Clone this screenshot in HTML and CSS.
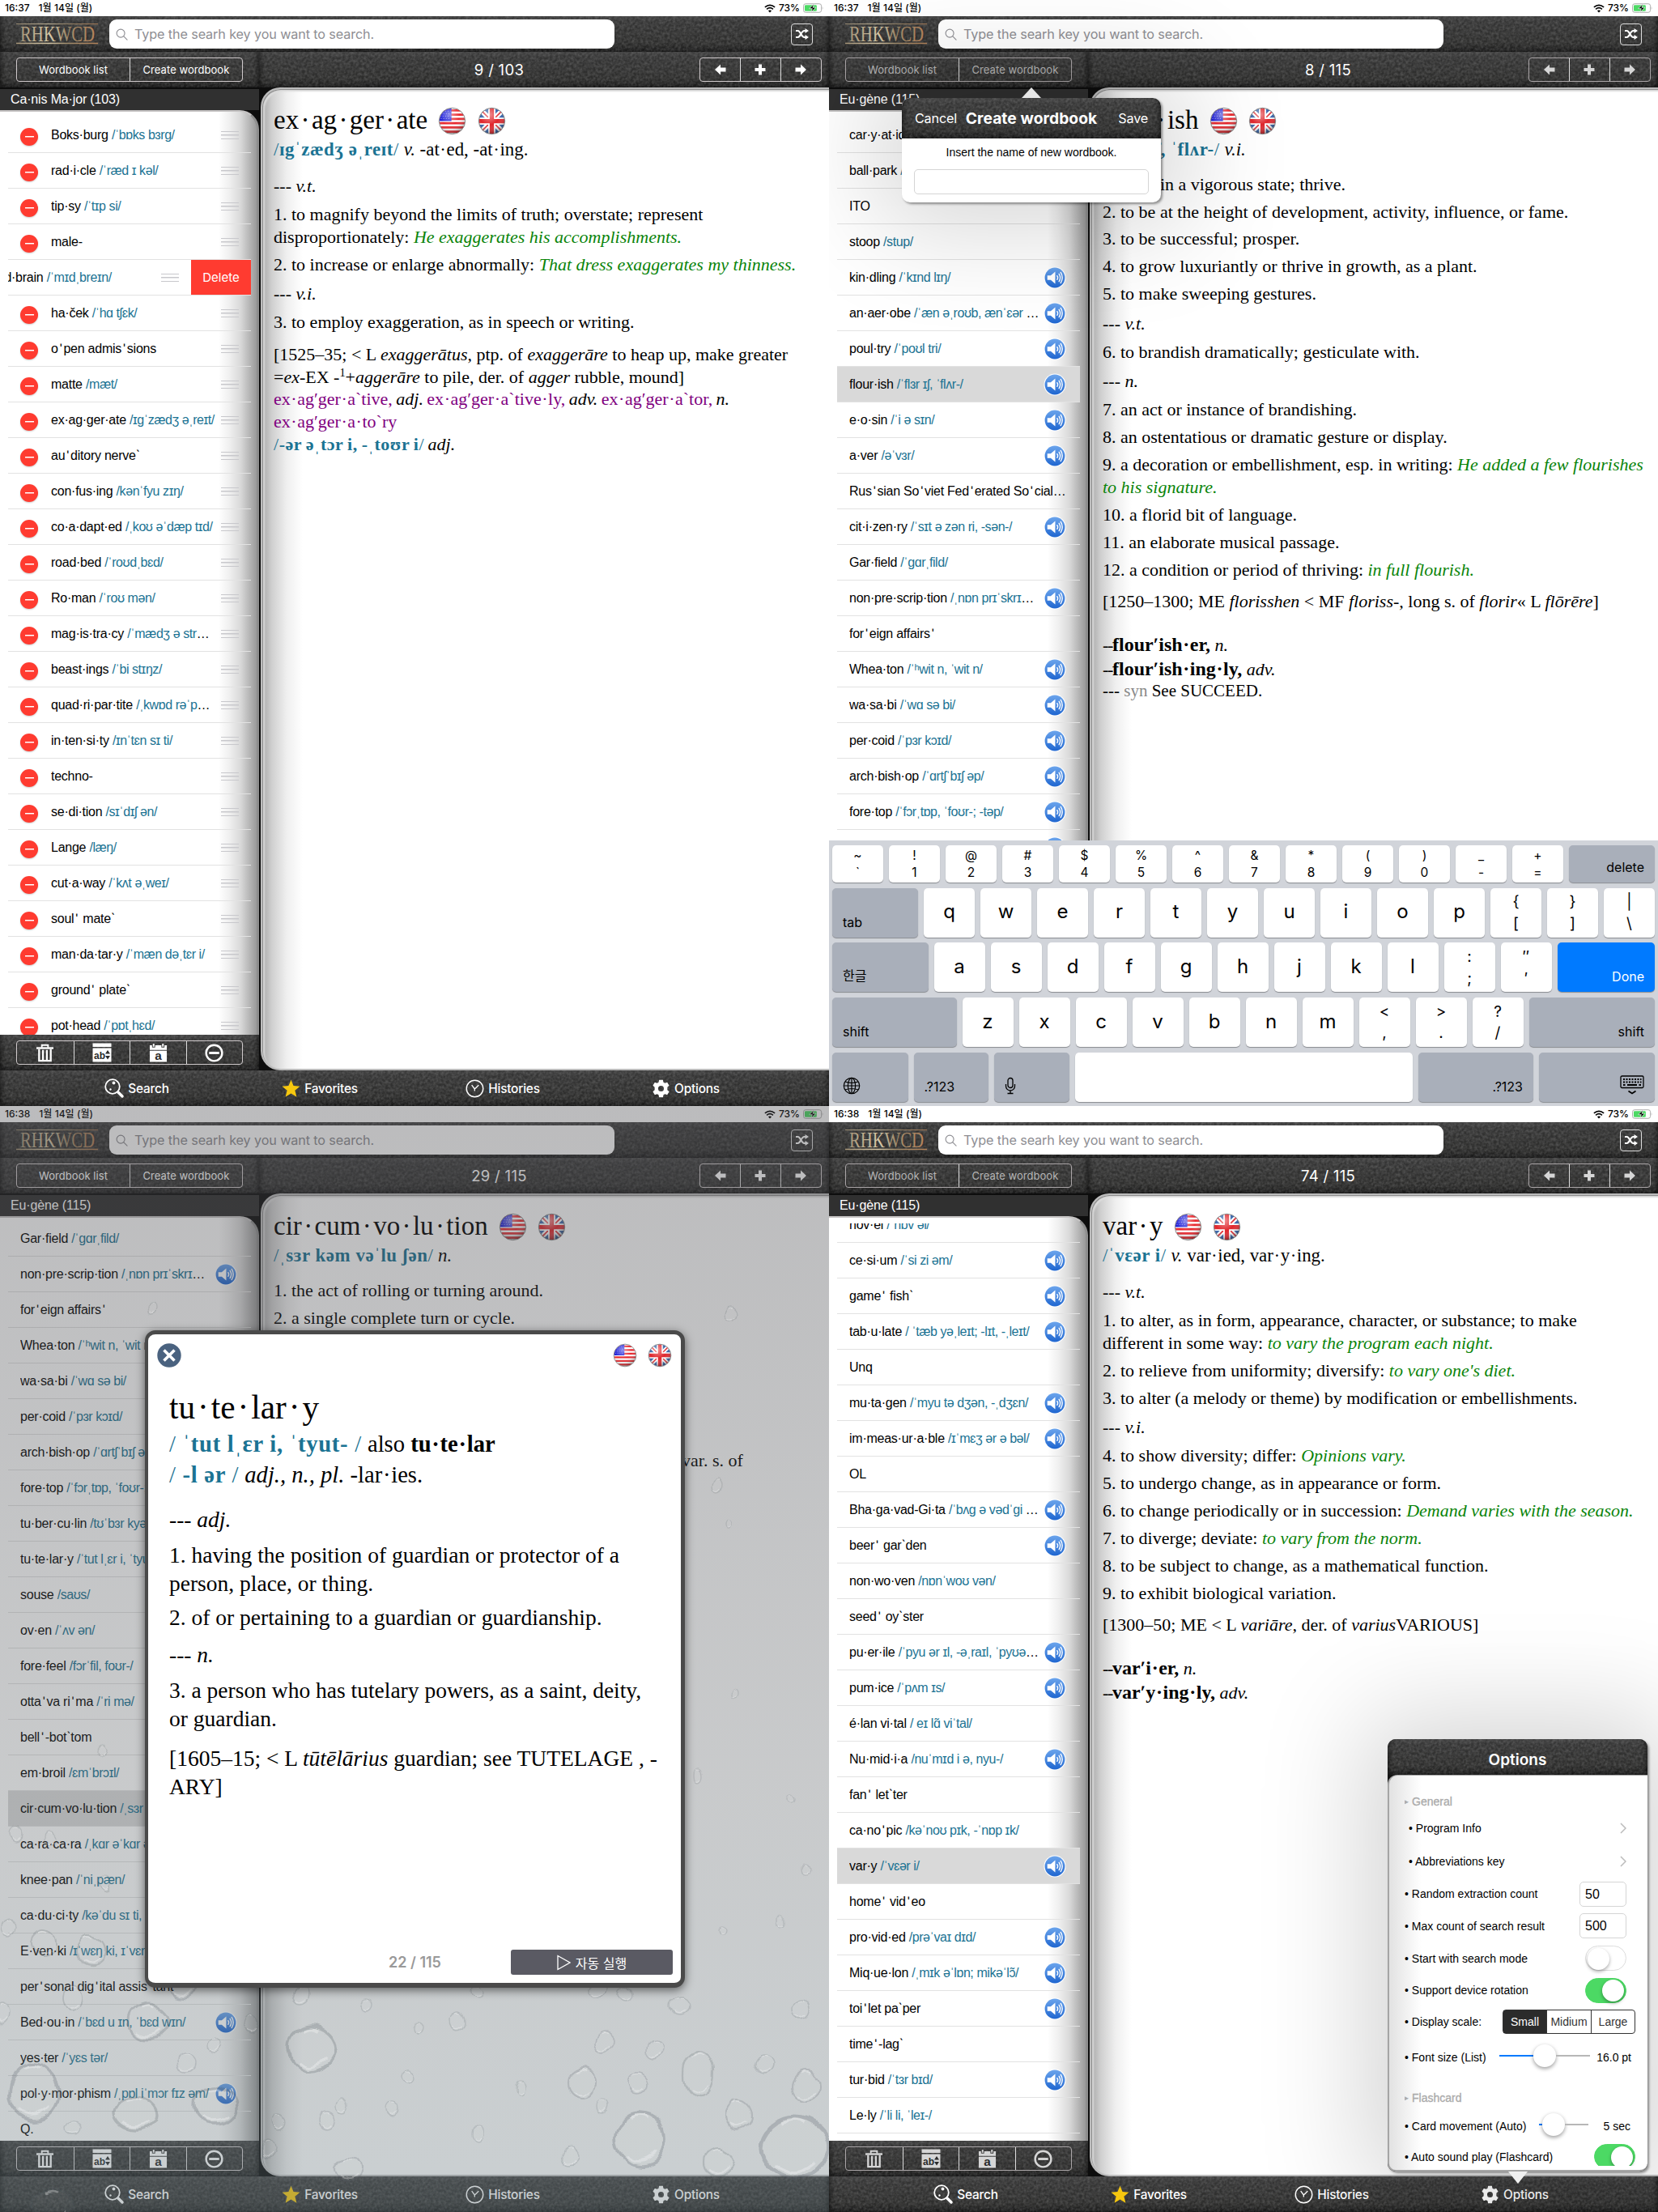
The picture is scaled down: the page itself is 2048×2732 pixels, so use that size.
FILE: index.html
```html
<!DOCTYPE html>
<html lang="en">
<head>
<meta charset="utf-8">
<title>RHKWCD dictionary</title>
<link rel="stylesheet" href="styles.css">
</head>
<body>
<svg class="sprite" aria-hidden="true">
  <defs>
    <clipPath id="round"><circle cx="20" cy="20" r="18"/></clipPath>
    <radialGradient id="gloss" cx=".4" cy=".25" r=".8"><stop offset="0" stop-color="#fff" stop-opacity=".5"/><stop offset=".5" stop-color="#fff" stop-opacity="0"/><stop offset="1" stop-color="#000" stop-opacity=".45"/></radialGradient>
    <linearGradient id="blue" x2="0" y2="1"><stop offset="0" stop-color="#6ba4ec"/><stop offset="1" stop-color="#1f66d0"/></linearGradient>
    <linearGradient id="gold"><stop offset="0" stop-color="#a8977a"/><stop offset=".4" stop-color="#d8c9a8"/><stop offset=".62" stop-color="#a08c6c"/><stop offset="1" stop-color="#b5835a"/></linearGradient>
    <filter id="wobble"><feTurbulence type="fractalNoise" baseFrequency=".03" numOctaves="2" seed="4"/><feDisplacementMap in="SourceGraphic" scale="16" xChannelSelector="R" yChannelSelector="G"/></filter>
  </defs>
  <symbol id="us" viewBox="0 0 40 40"><g clip-path="url(#round)"><path fill="#fff" d="M0 0h40v40H0z"/><path stroke="#e8252b" stroke-width="3" d="M0 5h40M0 11h40M0 17h40M0 23h40M0 29h40M0 35h40"/><path fill="#2020d8" d="M0 0h19v20H0z"/><path stroke="#9c9cf0" stroke-width="1" stroke-dasharray="1.2 2.4" d="M3 6h15M4 9.500h14M3 13h15M4 16.500h14"/></g><circle cx="20" cy="20" r="18" fill="url(#gloss)"/><circle cx="20" cy="20" r="18.500" fill="none" stroke="#777"/></symbol>
  <symbol id="uk" viewBox="0 0 40 40"><g clip-path="url(#round)"><path fill="#2f5fa8" d="M0 0h40v40H0z"/><path stroke="#fff" stroke-width="7" d="M4 4l32 32M36 4L4 36"/><path stroke="#e0262c" stroke-width="2" d="M4 4l32 32M36 4L4 36"/><path stroke="#fff" stroke-width="10" d="M20 0v40M0 20h40"/><path stroke="#e0262c" stroke-width="6" d="M20 0v40M0 20h40"/></g><circle cx="20" cy="20" r="18" fill="url(#gloss)"/><circle cx="20" cy="20" r="18.500" fill="none" stroke="#777"/></symbol>
  <symbol id="speaker" viewBox="0 0 30 30"><circle cx="15" cy="15" r="14.500" fill="#fff"/><circle cx="15" cy="15" r="13.300" fill="url(#blue)"/><path fill="#fff" d="M5 12h4.500l6-5v16l-6-5H5z"/><path fill="none" stroke="#fff" stroke-width="1.500" stroke-linecap="round" d="M18 12.500q1.800 2.500 0 5M20.500 10q3.200 5 0 10M22.700 8q4.300 7 0 14"/></symbol>
  <symbol id="search" viewBox="0 0 16 16"><g fill="none" stroke="#8e8e93" stroke-width="1.200" stroke-linecap="round"><circle cx="6.500" cy="6.500" r="5.300"/><path d="M10.500 10.500l4.500 4.500"/></g></symbol>
  <symbol id="shuffle" viewBox="0 0 16 14"><g fill="none" stroke="currentColor" stroke-width="2.200"><path d="M0 3h2.500c3.500 0 4 8 8 8H12M0 11h2.500c3.500 0 4-8 8-8H12"/></g><path fill="currentColor" d="M11.500 0L16 3l-4.500 3zM11.500 8l4.500 3-4.500 3z"/></symbol>
  <symbol id="left" viewBox="0 0 16 14"><path fill="currentColor" d="M1 7l7-6.500v4h6.500v5H8v4z"/></symbol>
  <symbol id="right" viewBox="0 0 16 14"><path fill="currentColor" d="M15 7L8 .5v4H1.500v5H8v4z"/></symbol>
  <symbol id="plus" viewBox="0 0 16 14"><path fill="currentColor" d="M6 .5h4V5h4.500v4H10v4.500H6V9H1.500V5H6z"/></symbol>
  <symbol id="trash" viewBox="0 0 24 24"><path fill="none" stroke="currentColor" stroke-width="2" d="M8 5V1.800h8V5"/><path fill="currentColor" d="M1 4.500h22V7H1z"/><path fill="none" stroke="currentColor" stroke-width="2.400" d="M4.500 7v15h15V7M9.500 8v14M14.500 8v14"/></symbol>
  <symbol id="sort" viewBox="0 0 24 24"><path fill="currentColor" d="M.5.500h23v4.500H.5zM.5 6.500h23v17H.5z"/><text x="2" y="19.500" class="glyph">ab</text><path fill="#2b2b2b" d="M19 9l3 4.500h-6zM19 20.500l3-4.500h-6z"/></symbol>
  <symbol id="date" viewBox="0 0 24 24"><path fill="currentColor" d="M1 2h3v3h4V2h8v3h4V2h3v6H1zM5 0h2v4H5zM17 0h2v4h-2zM1 9h22v14.500H1z"/><text x="7.500" y="20.500" class="glyph big">a</text></symbol>
  <symbol id="minus" viewBox="0 0 24 24"><circle cx="12" cy="12" r="10.300" fill="none" stroke="currentColor" stroke-width="2.600"/><path stroke="currentColor" stroke-width="3" d="M5.500 12h13"/></symbol>
  <symbol id="find" viewBox="0 0 24 24"><g fill="none" stroke="currentColor"><circle cx="10" cy="10" r="8.800" stroke-width="1.800"/><path stroke-width="3.400" stroke-linecap="round" d="M17 17l5 5"/></g><circle cx="11.500" cy="5.500" r="1.900" fill="currentColor"/><circle cx="7.500" cy="13.500" r="1.200" fill="currentColor"/></symbol>
  <symbol id="star" viewBox="0 0 24 24"><path fill="#f7c80f" d="M12 .8l3.200 7.600 8.300.6-6.400 5.300 2.100 8.500L12 18.200l-7.200 4.600 2.100-8.500L.5 9l8.300-.6z"/></symbol>
  <symbol id="clock" viewBox="0 0 24 24"><circle cx="12" cy="12" r="10.700" fill="none" stroke="currentColor" stroke-width="1.500"/><path fill="none" stroke="currentColor" stroke-width="1.400" d="M8 7.500l3.800 5L17 7.500M11.800 12v3"/></symbol>
  <symbol id="gear" viewBox="0 0 24 24"><path fill="currentColor" fill-rule="evenodd" d="M9.500.8h5l.6 3 2 1.100 2.900-1 2.500 4.300L20.200 10.200v3.600l2.300 2-2.500 4.300-2.900-1-2 1.100-.6 3h-5l-.6-3-2-1.100-2.900 1-2.500-4.300 2.300-2v-3.600l-2.300-2L4 3.900l2.900 1 2-1.100zM12 8.300a3.700 3.700 0 100 7.400 3.700 3.700 0 000-7.400z"/></symbol>
  <symbol id="wifi" viewBox="0 0 16 12"><path fill="none" stroke="#000" stroke-width="1.900" d="M1 4.200q7-6 14 0M3.500 7q4.500-3.800 9 0"/><path fill="#000" d="M5.600 9.200q2.400-2 4.800 0L8 11.800z"/></symbol>
  <symbol id="battery" viewBox="0 0 27 12"><rect x=".5" y=".5" width="23" height="11" rx="2.800" fill="none" stroke="#aaa"/><rect x="2" y="2" width="15.500" height="8" rx="1.500" fill="#4cd964"/><path fill="#aaa" d="M24.700 4q1.500 2 0 4z"/><path fill="#000" stroke="#fff" stroke-width=".7" d="M14 .6L8 6.700h3.800L10.300 11.400l6-6.200h-3.800z"/></symbol>
  <symbol id="close" viewBox="0 0 30 30"><circle cx="15" cy="15" r="14.700" fill="#4a627f"/><path stroke="#fff" stroke-width="3.600" d="M8.500 8.500l13 13M21.500 8.500l-13 13"/></symbol>
  <symbol id="globe" viewBox="0 0 22 22"><g fill="none" stroke="#000" stroke-width="1.200"><circle cx="11" cy="11" r="9.700"/><ellipse cx="11" cy="11" rx="4.600" ry="9.700"/><path d="M11 1v20M1.500 11h19M3 6q8 3 16 0M3 16q8-3 16 0"/></g></symbol>
  <symbol id="mic" viewBox="0 0 14 22"><g fill="none" stroke="#000" stroke-width="1.300"><rect x="4" y="1.500" width="6" height="12" rx="3"/><path d="M1.500 9v2.500a5.500 5.500 0 0011 0V9M7 17v3.500M3.500 20.500h7"/></g></symbol>
  <symbol id="keys" viewBox="0 0 30 24"><g fill="none" stroke="#000" stroke-width="1.300"><rect x="1" y="1" width="28" height="14.500" rx="1.500"/><path stroke-width="2" stroke-dasharray="2 1.500" d="M4 5h22.500M4 8.500h22.500"/><path stroke-width="1.800" d="M4 12h2.500M9 12h12M23.500 12H26M10.500 19.500l4.500 3 4.500-3"/></g></symbol>
  <symbol id="logo" viewBox="0 0 101 26"><path stroke="url(#gold)" stroke-width=".9" d="M0 .6h101v.01"/><path stroke="url(#gold)" stroke-width="1.500" d="M0 24.600h101v.01"/><text x="5" y="21.500" class="brand" textLength="92" lengthAdjust="spacingAndGlyphs" fill="url(#gold)">RHKWCD</text></symbol>
</svg>
<main id="board" class="board"></main>
<script src="app.js"></script>
</body>
</html>
```
FILE: styles.css
```css
* { box-sizing: border-box; }
body { margin: 0; background: #000; font-family: Inter, "Noto Sans CJK KR", sans-serif; color: #000; }
h1, h2, p, ul { margin: 0; padding: 0; }
svg { display: block; flex: none; }
.sprite { position: absolute; width: 0; height: 0; }
.glyph { font: bold 12px "Liberation Sans", sans-serif; fill: #2b2b2b; }
.glyph.big { font-size: 16px; }
.brand { font: 27px "Liberation Serif", serif; }

.board { display: grid; grid-template-columns: 1024px 1024px; grid-template-rows: 1366px 1366px; width: 2048px; }
.screen { position: relative; display: grid; grid-template-rows: 20px 44px 1258px 44px; overflow: hidden; background: #0d0d0d; }

.status { display: flex; align-items: center; gap: 4px; padding: 0 6px 0 6px; background: #fff; font-size: 12px; line-height: 16px; font-weight: 500; }
.status .day { margin: 0 auto 0 7px; letter-spacing: .05px; white-space: nowrap; }

.leather {
  background:
    url("data:image/svg+xml,%3Csvg xmlns='http://www.w3.org/2000/svg' width='256' height='256'%3E%3Cfilter id='n'%3E%3CfeTurbulence type='fractalNoise' baseFrequency='.3' numOctaves='2' stitchTiles='stitch'/%3E%3CfeColorMatrix values='0 0 0 0 1 0 0 0 0 1 0 0 0 0 1 .28 0 0 0 -.08'/%3E%3C/filter%3E%3Crect width='256' height='256' filter='url(%23n)'/%3E%3C/svg%3E"),
    linear-gradient(#4a4a4a, #343434 12%, #2d2d2c 75%, #191919);
  box-shadow: inset 4px 0 5px -2px rgba(0,0,0,.5), inset -4px 0 5px -2px rgba(0,0,0,.5);
  color: #fff;
}
.top { display: flex; align-items: center; padding: 0 20px; }
.field { display: flex; align-items: center; gap: 8px; width: 624px; height: 36px; margin-left: 14px; padding-left: 8px; border-radius: 9px; background: #fff; color: #8e8e93; font-size: 16.2px; letter-spacing: -.12px; }
.shuffle { display: grid; place-items: center; width: 27px; height: 27px; margin-left: auto; border: 1.500px solid #ddd; border-radius: 4px; }

.main { display: grid; grid-template-columns: 320px 704px; min-height: 0; }
.side { display: grid; grid-template-rows: 44px 28px 1142px 44px; min-width: 0; }
.bar { display: flex; align-items: center; padding: 0 20px; }
.seg { display: grid; grid-auto-flow: column; grid-auto-columns: 1fr; width: 280px; height: 30px; border: 1.500px solid #cfc9cb; border-radius: 4px; font-size: 13px; letter-spacing: .05px; }
.seg > * { display: grid; place-items: center; }
.seg > * + * { border-left: 1px solid #ddd; }
.seg.nav { width: 151px; margin-left: auto; padding-right: 1px; }
.muted .seg { color: #d6d6d6; border-color: #aaa5a7; }
.muted .wb { color: #b5b5b5; }
.head { position: relative; padding-right: 9px; }
.head .count { position: absolute; left: 0; right: 0; padding-right: 111px; text-align: center; font-size: 18.500px; letter-spacing: .3px; }
.book { margin-top: 2px; padding-left: 13px; background: #303030; color: #fff; font: 16px/26px "Liberation Sans", sans-serif; letter-spacing: -.15px; }

.list { overflow: hidden; border-top: 2px solid #c4c2c2; border-right: 3px solid #8e8e8e; border-radius: 0 24px 0 0; background: linear-gradient(90deg, #fff 270px, #f0f0f0 283px, #d9d9d9 297px, #9a9a9a 317px); padding-top: 7px; display: grid; }
.clip { overflow: hidden; }
.list ul { list-style: none; margin-top: var(--shift); }
.list li { display: flex; height: 44px; width: 300px; margin-left: 10px; overflow: hidden; border-bottom: 1.500px solid #e2e2e2; font: 16px/1.250 "Liberation Sans", sans-serif; }
.row { display: flex; align-items: center; gap: 4px; flex: none; width: 300px; padding: 1px 17px 0 15px; }
.word { flex: 1; min-width: 0; overflow: hidden; white-space: nowrap; text-overflow: ellipsis; letter-spacing: -.25px; }
.word b { font-weight: 400; padding: 0 2px; }
.ipa { color: #1b7393; letter-spacing: -.43px; }
.on { background: #d9d9d9; }
.edit .row { gap: 6px; padding-right: 15px; }
.stop { width: 22px; height: 22px; margin: 3px 10px 0 0; border-radius: 50%; background: linear-gradient(#fff, #fff) center / 11px 1.500px no-repeat #ff3b30; box-shadow: 0 1px 2px rgba(0,0,0,.2); flex: none; }
.grip { width: 22px; height: 10px; flex: none; border: solid #c8c8cc; border-width: 1.500px 0; background: linear-gradient(#c8c8cc, #c8c8cc) center / 22px 1.500px no-repeat; }
.swiped .row { margin-left: -74px; }
.delete { display: grid; place-items: center; width: 74px; background: #ff3b30; color: #fff; font: 15px Inter, sans-serif; }

.view { display: grid; grid-template-rows: 44px 1214px; min-width: 0; }
.page { margin-left: 2px; padding: 19px 0 0 14px; border: 2px solid #bcbcbc; border-right: 0; border-radius: 24px 0 0 24px; box-shadow: inset 1px 1px 1px #858585, inset 3px 3px 2px #ddd; background: linear-gradient(90deg, #a8a8a8, #d0d0d0 12px, #efefef 30px, #fff 50px); font-size: 22px; overflow: hidden; }

.entry { font-family: "Liberation Serif", serif; line-height: 1.2727; white-space: nowrap; }
.entry h1 { display: flex; align-items: center; gap: .4em; font-size: 1.5em; line-height: 1.212; font-weight: 400; }
.entry h1 svg { margin-top: .05em; }
.entry h1 u { padding: 0 .072em; }
.entry u { text-decoration: none; padding: 0 .025em; }
.entry .sub { font-size: 1.04em; line-height: 1.311; margin-top: .045em; }
.entry .pro { color: #1b7393; font-weight: 700; letter-spacing: .025em; }
.entry s { font-weight: 400; text-decoration: none; }
.entry .pos { margin-top: .39em; }
.entry .def { margin-top: .27em; }
.entry .pos + .def { margin-top: .32em; }
.entry .sub + .pos { margin-top: .72em; }
.entry .sub + .def { margin-top: .62em; }
.entry .ety { margin-top: .51em; }
.entry .fam { margin-top: 1.12em; line-height: 1.364; }
.entry .fam b { font-size: 1.09em; line-height: 1; }
.entry .fam s { letter-spacing: -.06em; }
.entry .syn { margin-top: -.07em; font-size: .955em; }
.entry .forms { word-spacing: -.05em; }
.entry .ex { color: #0a840a; font-style: italic; }
.entry .run { color: #800080; }
.entry .gray { color: #888; }
.entry sup { font-size: .65em; line-height: 0; }
.entry .tail { margin: 148px 0 0 504px; }

.tabs { display: grid; grid-template-columns: repeat(4, 226px); padding-left: 56px; font-size: 15.400px; font-weight: 500; letter-spacing: -.2px; }
.tabs span { display: flex; align-items: center; justify-content: center; gap: 5px; }

.popover { position: absolute; border-radius: 10px; box-shadow: 0 0 130px 30px rgba(0,0,0,.17), 2px 2px 3px rgba(0,0,0,.4); }
.create { left: 90px; top: 121px; width: 320px; height: 129px; background: #fff; }
.create::before { content: ""; position: absolute; left: 148px; top: -13px; border: solid transparent; border-width: 0 12px 13px; border-bottom-color: #e6e6e6; }
.create header { display: grid; grid-template-columns: 1fr auto 1fr; align-items: center; height: 50px; padding: 0 16px; border-radius: 10px 10px 0 0; font-size: 16.200px; letter-spacing: -.2px; }
.create header :last-child { text-align: right; }
.create h2 { font-size: 19.200px; font-weight: 700; letter-spacing: .1px; }
.create p { margin: 9px 0 13px; text-align: center; font: 14px/16px "Liberation Sans", sans-serif; }
.input { height: 31px; border: 1px solid #d5d5d5; border-radius: 5px; background: #fff; }
.create .input { margin: 0 15px; }

.keyboard { position: absolute; left: 0; right: 0; bottom: 0; height: 328px; padding: 6px 4px 4px; display: grid; grid-template-rows: 46px repeat(4, 61px); row-gap: 6.700px; background: #d1d4da; }
.krow { display: flex; gap: 7px; }
.key { flex: none; display: flex; flex-direction: column; align-items: center; justify-content: center; width: 63px; padding-bottom: 3px; border-radius: 5px; background: #fff; box-shadow: 0 1px 1px #888b90; font-size: 24px; }
.key.two { justify-content: space-evenly; font-size: 19px; line-height: 1; padding-bottom: 0; }
.krow:first-child .key.two { font-size: 15.500px; }
.key.fn { background: #a9afba; font-size: 16px; align-items: flex-start; justify-content: flex-end; padding: 0 13px 9px; }
.key.fn.end { align-items: flex-end; }
.key.wide { flex: 1; }
.key.fn.done { background: #007aff; color: #fff; }
.krow:first-child .fn { justify-content: center; padding-bottom: 0; padding-top: 7px; }

.veil { position: absolute; inset: 0; background: linear-gradient(rgba(72,72,76,.37), rgba(85,90,94,.32) 60%, rgba(100,116,122,.34)); }
.card { position: absolute; left: 179px; top: 277px; width: 667px; height: 812px; border: solid #4a4a4a; border-width: 5px 5px 6px 4px; border-radius: 13px; background: #fff; box-shadow: 0 3px 12px rgba(0,0,0,.55); display: grid; grid-template-rows: 66px 1fr 55px; }
.cardtop { display: flex; align-items: center; gap: 13px; padding: 0 11px 14px; }
.cardtop :nth-child(2) { margin-left: auto; }
.card .entry { padding-left: 26px; font-size: 27.500px; }
.cardend { display: grid; grid-template-columns: 1fr 200px; padding: 14px 10px 10px 0; align-items: center; }
.cardend b { padding-left: 211px; text-align: center; color: #999; font-size: 18px; font-weight: 600; }
.auto { display: flex; align-items: center; justify-content: center; gap: 6px; height: 31px; border-radius: 3px; background: #5a5a63; color: #fff; font-size: 16px; }

.options { left: 690px; top: 782px; width: 321px; height: 534px; display: grid; grid-template-rows: 44px 1fr; background: #151515; }
.options::after { content: ""; position: absolute; left: 149px; bottom: -15px; border: solid transparent; border-width: 15px 12px 0; border-top-color: #f0f0f0; }
.options h2 { display: grid; place-items: center; padding-top: 6px; border-radius: 10px 10px 0 0; font-size: 19px; font-weight: 600; }
.sheet { overflow: hidden; padding: 18px 0 0 19px; border: solid #a5a5a5; border-width: 1px 0 2px 2px; border-radius: 12px 0 10px 10px; background: linear-gradient(90deg, #e2e2e2, #fff 40px); font: 14px "Liberation Sans", sans-serif; }
.opts { height: 464px; overflow: hidden; }
.opt { display: flex; align-items: center; height: 40px; padding-right: 26px; white-space: nowrap; }
.opt > :last-child { margin-left: auto; }
.opt .input { width: 58px; padding-left: 6px; font: 16px/29px "Liberation Sans", sans-serif; }
.opt.link { padding-left: 5px; }
.opt.group { color: #aaa; -webkit-text-stroke: .3px #aaa; }
.opt.group > span { margin-left: 0; }
.opt.group::before { content: "▸"; width: 9px; font: 9px "DejaVu Sans"; }
.switch { width: 51px; height: 31px; padding: 1.500px; border-radius: 16px; border: 1px solid #ddd; background: #fff; }
.switch::before { content: ""; display: block; width: 27px; height: 27px; border-radius: 50%; background: #fff; box-shadow: 0 2px 4px rgba(0,0,0,.35); }
.switch.yes { background: #4cd964; border-color: #4cd964; padding-left: 20px; }
.scale { display: grid; grid-template-columns: 53px 55px 54px; height: 30px; border: 1px solid #333; border-radius: 4px; color: #333; }
.scale span { display: grid; place-items: center; }
.scale span + span { border-left: 1px solid #333; }
.scale .sel { background: #2b2b2b; color: #fff; }
.slider { display: flex; align-items: center; height: 28px; margin-top: -4px; }
.slider::before { content: ""; width: var(--a); height: 2px; background: #007aff; }
.slider::after { content: ""; width: var(--b); height: 2px; background: #b7b7b7; }
.slider i { width: 28px; height: 28px; border-radius: 50%; background: #fff; box-shadow: 0 2px 5px rgba(0,0,0,.4); }
```
FILE: app.js
```js
const icon = (id, w, h = w) => `<svg width="${w}" height="${h}"><use href="#${id}"/></svg>`;
const flags = size => icon('us', size) + icon('uk', size);

// Word lists: "word|pronunciation|flags", where s = has sound, x = selected, d = swiped for delete
const canis = `Boks·burg|ˈbɒks bɜrg
rad·i·cle|ˈræd ɪ kəl
tip·sy|ˈtɪp si
male-
mid·brain|ˈmɪdˌbreɪn|d
ha·ček|ˈhɑ tʃɛk
oʹpen admisʹsions
matte|mæt
ex·ag·ger·ate|ɪgˈzædʒ əˌreɪt
auʹditory nerveˋ
con·fus·ing|kənˈfyu zɪŋ
co·a·dapt·ed|ˌkoʊ əˈdæp tɪd
road·bed|ˈroʊdˌbɛd
Ro·man|ˈroʊ mən
mag·is·tra·cy|ˈmædʒ ə strə si
beast·ings|ˈbi stɪŋz
quad·ri·par·tite|ˌkwɒd rəˈpɑr taɪt
in·ten·si·ty|ɪnˈtɛn sɪ ti
techno-
se·di·tion|sɪˈdɪʃ ən
Lange|læŋ
cut·a·way|ˈkʌt əˌweɪ
soulʹ mateˋ
man·da·tar·y|ˈmæn dəˌtɛr i
groundʹ plateˋ
pot·head|ˈpɒtˌhɛd`;
const eugeneA = `car·y·at·id|ˌkær iˈæt ɪd|s
ball·park|ˈbɔlˌpɑrk|s
ITO
stoop|stup
kin·dling|ˈkɪnd lɪŋ|s
an·aer·obe|ˈæn əˌroʊb, ænˈɛər oʊb|s
poul·try|ˈpoʊl tri|s
flour·ish|ˈflɜr ɪʃ, ˈflʌr-|sx
e·o·sin|ˈi ə sɪn|s
a·ver|əˈvɜr|s
Rusʹsian Soʹviet Fedʹerated Soʹcialist Republic
cit·i·zen·ry|ˈsɪt ə zən ri, -sən-|s
Gar·field|ˈgɑrˌfild
non·pre·scrip·tion|ˌnɒn prɪˈskrɪp ʃən|s
forʹeign affairsʹ
Whea·ton|ˈʰwit n, ˈwit n|s
wa·sa·bi|ˈwɑ sə bi|s
per·coid|ˈpɜr kɔɪd|s
arch·bish·op|ˈɑrtʃˈbɪʃ əp|s
fore·top|ˈfɔrˌtɒp, ˈfoʊr-; -təp|s
tu·ber·cu·lin|tʊˈbɜr kyə lɪn|s`;
const eugeneB = `Gar·field|ˈgɑrˌfild
non·pre·scrip·tion|ˌnɒn prɪˈskrɪp ʃən|s
forʹeign affairsʹ
Whea·ton|ˈʰwit n, ˈwit n|s
wa·sa·bi|ˈwɑ sə bi|s
per·coid|ˈpɜr kɔɪd|s
arch·bish·op|ˈɑrtʃˈbɪʃ əp|s
fore·top|ˈfɔrˌtɒp, ˈfoʊr-; -təp|s
tu·ber·cu·lin|tʊˈbɜr kyə lɪn|s
tu·te·lar·y|ˈtut lˌɛr i, ˈtyut-|s
souse|saʊs
ov·en|ˈʌv ən|s
fore·feel|fɔrˈfil, foʊr-
ottaʹva riʹma|ˈri mə
bellʹ-botˋtom
em·broil|ɛmˈbrɔɪl|s
cir·cum·vo·lu·tion|ˌsɜr kəm vəˈlu ʃən|sx
ca·ra·ca·ra|ˌkɑr əˈkɑr ə|s
knee·pan|ˈniˌpæn
ca·du·ci·ty|kəˈdu sɪ ti, -ˈdyu-|s
E·ven·ki|ɪˈwɛŋ ki, ɪˈvɛŋ-|s
perʹsonal digʹital assisʹtant
Bed·ou·in|ˈbɛd u ɪn, ˈbɛd wɪn|s
yes·ter|ˈyɛs tər
pol·y·mor·phism|ˌpɒl iˈmɔr fɪz əm|s
Q.`;
const eugeneC = `nov·el|ˈnɒv əl
ce·si·um|ˈsi zi əm|s
gameʹ fishˋ||s
tab·u·late| ˈtæb yəˌleɪt; -lɪt, -ˌleɪt|s
Unq
mu·ta·gen|ˈmyu tə dʒən, -ˌdʒɛn|s
im·meas·ur·a·ble|ɪˈmɛʒ ər ə bəl|s
OL
Bha·ga·vad-Gi·ta|ˈbʌg ə vədˈgi tɑ, -tə|s
beerʹ garˋden||s
non·wo·ven|nɒnˈwoʊ vən
seedʹ oyˋster
pu·er·ile|ˈpyu ər ɪl, -əˌraɪl, ˈpyʊər ɪl|s
pum·ice|ˈpʌm ɪs|s
é·lan vi·tal| eɪ lɑ̃ viˈtal
Nu·mid·i·a|nuˈmɪd i ə, nyu-|s
fanʹ letˋter
ca·noʹpic|kəˈnoʊ pɪk, -ˈnɒp ɪk
var·y|ˈvɛər i|sx
homeʹ vidʹeo
pro·vid·ed|prəˈvaɪ dɪd|s
Miq·ue·lon|ˌmɪk əˈlɒn; mikəˈlɔ̃|s
toiʹlet paˋper||s
timeʹ-lagˋ
tur·bid|ˈtɜr bɪd|s
Le·ly|ˈli li, ˈleɪ-`;

function row(line, edit) {
  const [word, ipa = '', mark = ''] = line.split('|');
  const name = word.replace(/ʹ/g, '<b>ʹ</b>');
  const text = `<span class="word">${name}${ipa ? ` <span class="ipa">/${ipa}/</span>` : ''}</span>`;
  const has = m => mark.includes(m);
  const body = edit
    ? `<i class="stop"></i>${text}<i class="grip"></i>`
    : text + (has('s') ? icon('speaker', 28) : '');
  return `<li class="${has('x') ? 'on' : ''} ${has('d') ? 'swiped' : ''}"><div class="row">${body}</div>${has('d') ? '<span class="delete">Delete</span>' : ''}</li>`;
}

const dots = html => html.replace(/·/g, '<u>·</u>');
const p = (cls, html) => `<p class="${cls}">${html}</p>`;
const def = (...items) => items.map(t => p('def', t.replace(/\{/g, '<span class="ex">').replace(/\}/g, '</span>'))).join('');
const pos = t => p('pos', `--- <i>${t}</i>`);

const exaggerate = dots(`<h1><span>ex·ag·ger·ate</span>${flags(35)}</h1>` +
  p('sub', `<span class="pro"><s>/</s>ɪgˈzædʒ əˌreɪt<s>/</s></span> <i>v.</i> -at·ed, -at·ing.`) + pos('v.t.') +
  def('1. to magnify beyond the limits of truth; overstate; represent<br>disproportionately: {He exaggerates his accomplishments.}', '2. to increase or enlarge abnormally: {That dress exaggerates my thinness.}') +
  pos('v.i.') + def('3. to employ exaggeration, as in speech or writing.') +
  p('ety', '[1525–35; &lt; L <i>exaggerātus,</i> ptp. of <i>exaggerāre</i> to heap up, make greater<br>=<i>ex</i>-EX -<sup>1</sup>+<i>aggerāre</i> to pile, der. of <i>agger</i> rubble, mound]') +
  p('forms', '<span class="run">ex·agʹger·aˋtive,</span> <i>adj.</i> <span class="run">ex·agʹger·aˋtive·ly,</span> <i>adv.</i> <span class="run">ex·agʹger·aˋtor,</span> <i>n.</i><br><span class="run">ex·agʹger·a·toˋry</span><br><span class="pro"><s>/</s>-ər əˌtɔr i, -ˌtoʊr i<s>/</s></span> <i>adj.</i>'));

const flourish = dots(`<h1><span>flour·ish</span>${flags(35)}</h1>` +
  p('sub', `<span class="pro"><s>/</s>ˈflɜr ɪʃ, ˈflʌr-<s>/</s></span> <i>v.i.</i>`) +
  def('1. to be in a vigorous state; thrive.', '2. to be at the height of development, activity, influence, or fame.', '3. to be successful; prosper.', '4. to grow luxuriantly or thrive in growth, as a plant.', '5. to make sweeping gestures.') +
  pos('v.t.') + def('6. to brandish dramatically; gesticulate with.') + pos('n.') +
  def('7. an act or instance of brandishing.', '8. an ostentatious or dramatic gesture or display.', '9. a decoration or embellishment, esp. in writing: {He added a few flourishes<br>to his signature.}', '10. a florid bit of language.', '11. an elaborate musical passage.', '12. a condition or period of thriving: {in full flourish.}') +
  p('ety', '[1250–1300; ME <i>florisshen</i> &lt; MF <i>floriss-,</i> long s. of <i>florir</i>« L <i>flōrēre</i>]') +
  p('fam', '<s>--</s><b>flourʹish·er,</b> <i>n.</i><br><s>--</s><b>flourʹish·ing·ly,</b> <i>adv.</i>') +
  p('syn', '--- <span class="gray">syn</span> See SUCCEED.'));

const circum = dots(`<h1><span>cir·cum·vo·lu·tion</span>${flags(35)}</h1>` +
  p('sub', `<span class="pro"><s>/</s>ˌsɜr kəm vəˈlu ʃən<s>/</s></span> <i>n.</i>`) +
  def('1. the act of rolling or turning around.', '2. a single complete turn or cycle.') + p('tail', 'var. s. of'));

const vary = dots(`<h1><span>var·y</span>${flags(35)}</h1>` +
  p('sub', `<span class="pro"><s>/</s>ˈvɛər i<s>/</s></span> <i>v.</i> var·ied, var·y·ing.`) + pos('v.t.') +
  def('1. to alter, as in form, appearance, character, or substance; to make<br>different in some way: {to vary the program each night.}', "2. to relieve from uniformity; diversify: {to vary one's diet.}", '3. to alter (a melody or theme) by modification or embellishments.') +
  pos('v.i.') + def('4. to show diversity; differ: {Opinions vary.}', '5. to undergo change, as in appearance or form.', '6. to change periodically or in succession: {Demand varies with the season.}', '7. to diverge; deviate: {to vary from the norm.}', '8. to be subject to change, as a mathematical function.', '9. to exhibit biological variation.') +
  p('ety', '[1300–50; ME &lt; L <i>variāre,</i> der. of <i>varius</i>VARIOUS]') +
  p('fam', '<s>--</s><b>varʹi·er,</b> <i>n.</i><br><s>--</s><b>varʹy·ing·ly,</b> <i>adv.</i>'));

const tutelary = dots('<h1><span>tu·te·lar·y</span></h1>' +
  p('sub', `<span class="pro"><s>/</s> ˈtut lˌɛr i, ˈtyut- <s>/</s></span> also <b>tu·te·lar</b><br><span class="pro"><s>/</s> -l ər <s>/</s></span> <i>adj., n., pl.</i> -lar·ies.`) +
  pos('adj.') + def('1. having the position of guardian or protector of a<br>person, place, or thing.', '2. of or pertaining to a guardian or guardianship.') +
  pos('n.') + def('3. a person who has tutelary powers, as a saint, deity,<br>or guardian.') +
  p('ety', '[1605–15; &lt; L <i>tūtēlārius</i> guardian; see TUTELAGE , -<br>ARY]'));

const createPopover = `<div class="popover create"><header class="leather"><span>Cancel</span><h2>Create wordbook</h2><span>Save</span></header>
  <p>Insert the name of new wordbook.</p><div class="input"></div></div>`;

const key = (c, cls = '', w = '') => `<span class="key ${cls}"${w ? ` style="width:${w}px"` : ''}>${c}</span>`;
const singles = s => [...s].map(c => key(c)).join('');
const pairs = s => s.split(' ').map(c => key(`<span>${c[0].replace('<', '&lt;')}</span><span>${c[1]}</span>`, 'two')).join('');
const keyboard = `<div class="keyboard">
  <div class="krow">${pairs('~` !1 @2 #3 $4 %5 ^6 &7 *8 (9 )0 _- +=')}${key('delete', 'fn end wide')}</div>
  <div class="krow">${key('tab', 'fn wide')}${singles('qwertyuiop')}${pairs('{[ }] |\\')}</div>
  <div class="krow">${key('한글', 'fn', 118.5)}${singles('asdfghjkl')}${pairs(`:; ″′`)}${key('Done', 'fn end wide done')}</div>
  <div class="krow">${key('shift', 'fn', 153.5)}${singles('zxcvbnm')}${pairs('<, >. ?/')}${key('shift', 'fn end wide')}</div>
  <div class="krow">${key(icon('globe', 22), 'fn', 93.5)}${key('.?123', 'fn', 92.5)}${key(icon('mic', 14, 22), 'fn', 92.5)}${key('', 'wide')}${key('.?123', 'fn end', 142.5)}${key(icon('keys', 30, 24), 'fn end', 143)}</div>
</div>`;

// Water drops on the glass behind the flashcard: centre x, y, radius x, y
const drops = [[385,1163,29,28],[792,1275,30,33],[982,1286,42,38],[42,1218,30,34],[168,1244,26,22],[863,1196,18,28],[913,1247,17,20],[720,1207,17,18],[183,1130,24,22],[265,1235,27,22],[54,1034,16,16],[112,1043,18,18],[88,1102,14,15],[228,1085,20,15],[746,1157,13,13],[788,1210,13,14],[838,1113,11,12],[990,1116,12,12],[374,1098,11,11],[736,1091,12,11],[429,1314,17,15],[887,1303,18,16],[943,1184,12,12],[995,1211,17,17],[404,1253,10,12],[231,1181,10,10],[65,1358,25,20],[483,1236,8,9],[421,1233,7,10],[505,1199,9,9],[590,1268,7,8],[704,1297,9,9],[563,1131,8,12],[808,1166,10,11],[265,1159,8,9],[310,1135,8,12],[91,1262,8,8],[130,960,6,9],[62,905,7,7],[861,829,5,8],[976,857,4,5],[993,942,5,6],[892,1020,5,6],[965,1006,4,5],[908,730,4,5],[900,256,8,9],[885,466,6,8],[901,516,4,5],[188,251,6,7],[127,795,6,7],[452,1109,8,8],[588,1096,8,7],[640,1211,6,8],[772,1098,8,8],[4,1120,8,15],[332,1287,9,12],[347,1253,9,10],[518,1137,6,7],[744,1235,7,8],[20,900,8,9],[10,1015,9,10]];
const rain = `<svg width="1024" height="1366" viewBox="0 0 1024 1366"><g filter="url(#wobble)">${drops.map(([x, y, a, b]) => {
  const w = Math.max(1.4, a / 8), o = Math.min(.24, .14 + a / 300);
  return `<ellipse cx="${x}" cy="${y}" rx="${a}" ry="${b}" fill="#fff" fill-opacity=".03" stroke="#4a545a" stroke-opacity="${o}" stroke-width="${w}"/><path d="M${x - a * .6} ${y + b * .6}Q${x} ${y + b * 1.05} ${x + a * .6} ${y + b * .5}M${x - a * .4} ${y - b * .8}Q${x} ${y - b} ${x + a * .3} ${y - b * .8}" fill="none" stroke="#fff" stroke-opacity=".3" stroke-width="${w * .8}"/>`;
}).join('')}</g></svg>`;

const card = `<div class="veil">${rain}</div><div class="card">
  <div class="cardtop">${icon('close', 30)}${flags(30)}</div>
  <article class="entry">${tutelary}</article>
  <div class="cardend"><b>22 / 115</b><span class="auto"><svg width="17" height="20" viewBox="0 0 17 20"><path d="M1 1.500v17L16 10z" fill="none" stroke="#fff" stroke-width="1.300"/></svg>자동 실행</span></div>
</div>`;

const opt = (label, control, h, cls = '', style = '') => `<div class="opt ${cls}" style="height:${h}px;${style}"><span>${label}</span>${control}</div>`;
const chevron = '<svg width="8" height="14" viewBox="0 0 8 14"><path d="M1 1l6 6-6 6" fill="none" stroke="#bbb" stroke-width="1.500"/></svg>';
const slider = (a, b) => `<span class="slider" style="--a:${a}px;--b:${b}px"><i></i></span>`;
const options = `<div class="popover options"><h2 class="leather">Options</h2><div class="sheet"><div class="opts">` +
  opt('General', '', 27, 'group') + opt('• Program Info', chevron, 40, 'link') + opt('• Abbreviations key', chevron, 41, 'link') +
  opt('• Random extraction count', '<span class="input">50</span>', 40) + opt('• Max count of search result', '<span class="input">500</span>', 39.5) +
  opt('• Start with search mode', '<span class="switch"></span>', 40) + opt('• Support device rotation', '<span class="switch yes"></span>', 39) +
  opt('• Display scale:', '<span class="scale"><span class="sel">Small</span><span>Midium</span><span>Large</span></span>', 38, '', 'padding-right:15px') +
  opt('• Font size (List)', `<span style="width:16px"></span>${slider(42, 42)}<span>16.0 pt</span>`, 50, '', 'padding-right:20px') +
  opt('Flashcard', '', 50, 'group') +
  opt('• Card movement (Auto)', `<span style="width:16px"></span>${slider(4, 29)}<span>5 sec</span>`, 36, '', 'padding-right:21px;margin-top:-8px') +
  opt('• Auto sound play (Flashcard)', '<span class="switch yes"></span>', 40, '', 'padding-right:15px') + '</div></div></div>';

function screen(s) {
  return `<section class="screen ${s.muted ? 'muted' : ''}">
  <div class="status"><span>${s.time}</span><span class="day">1월 14일 (월)</span>${icon('wifi', 14, 11)}<span>73%</span>${icon('battery', 26, 12)}</div>
  <header class="top leather">${icon('logo', 101, 26)}<div class="field">${icon('search', 15)}Type the searh key you want to search.</div><span class="shuffle">${icon('shuffle', 16, 14)}</span></header>
  <div class="main">
    <aside class="side">
      <div class="bar leather"><div class="seg wb"><span>Wordbook list</span><span>Create wordbook</span></div></div>
      <div class="book">${s.book}</div>
      <div class="list"><div class="clip"><ul class="${s.edit ? 'edit' : ''}" style="--shift:${s.shift}px">${s.words.split('\n').map(w => row(w, s.edit)).join('')}</ul></div></div>
      <div class="bar leather"><div class="seg"><span>${icon('trash', 23)}</span><span>${icon('sort', 24)}</span><span>${icon('date', 23)}</span><span>${icon('minus', 23)}</span></div></div>
    </aside>
    <div class="view">
      <div class="bar leather head"><span class="count">${s.count}</span><div class="seg nav"><span>${icon('left', 16, 14)}</span><span>${icon('plus', 16, 14)}</span><span>${icon('right', 16, 14)}</span></div></div>
      <article class="page entry">${s.entry}</article>
    </div>
  </div>
  <nav class="tabs leather"><span>${icon('find', 24)}Search</span><span>${icon('star', 23)}Favorites</span><span>${icon('clock', 23)}Histories</span><span>${icon('gear', 23)}Options</span></nav>
  ${s.over || ''}</section>`;
}

document.getElementById('board').innerHTML = [
  { time: '16:37', book: 'Ca·nis Ma·jor (103)', count: '9 / 103', words: canis, shift: 0, edit: true, entry: exaggerate },
  { time: '16:37', book: 'Eu·gène (115)', count: '8 / 115', words: eugeneA, shift: 0, muted: true, entry: flourish, over: createPopover + keyboard },
  { time: '16:38', book: 'Eu·gène (115)', count: '29 / 115', words: eugeneB, shift: -3, entry: circum, over: card },
  { time: '16:38', book: 'Eu·gène (115)', count: '74 / 115', words: eugeneC, shift: -20.5, muted: true, entry: vary, over: options },
].map(screen).join('');
```
